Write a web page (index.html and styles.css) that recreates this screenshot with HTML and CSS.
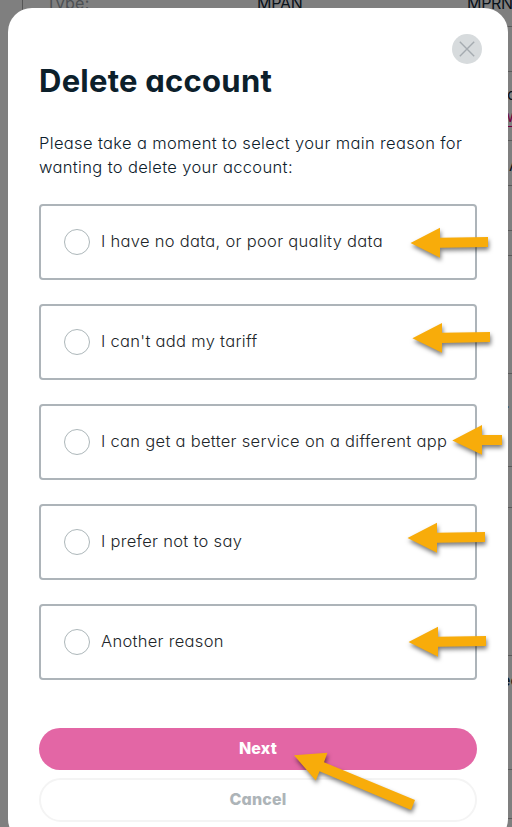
FILE: index.html
```html
<!DOCTYPE html>
<html lang="en">
<head>
    <meta charset="UTF-8">
    <meta name="viewport" content="width=device-width, initial-scale=1.0">
    <title>Delete account</title>
    <link rel="stylesheet" href="styles.css">
</head>
<body>
    <div class="page">
        <div class="row row-head"><span class="label">Type:</span><span>MPAN</span><span>MPRN</span></div>
        <div class="row row-sm"></div>
        <div class="row row-md edge"><span>o</span><a class="link">w</a></div>
        <div class="row row-sm edge"><span class="initial">A</span></div>
        <div class="row row-sm"></div>
        <div class="row row-xs"></div>
        <div class="row row-lg"></div>
        <div class="row row-tall edge"><span class="stop">.</span></div>
        <div class="row row-short"></div>
        <div class="row row-xl"></div>
        <div class="row row-plan edge"><span class="plan">ec</span></div>
        <div class="row row-last"></div>
    </div>

    <div class="overlay">
        <div class="modal">
            <button class="close" aria-label="Close">
                <svg width="30" height="30" viewBox="0 0 30 30"><path d="M7.8 7.8 22.2 22.2M22.2 7.8 7.8 22.2"/></svg>
            </button>
            <h1>Delete account</h1>
            <p>Please take a moment to select your main reason for<br>wanting to delete your account:</p>

            <div class="options">
                <label class="option"><input type="radio" name="reason"><span>I have no data, or poor quality data</span></label>
                <label class="option"><input type="radio" name="reason"><span>I can't add my tariff</span></label>
                <label class="option"><input type="radio" name="reason"><span>I can get a better service on a different app</span></label>
                <label class="option"><input type="radio" name="reason"><span>I prefer not to say</span></label>
                <label class="option"><input type="radio" name="reason"><span>Another reason</span></label>
            </div>

            <div class="actions">
                <button class="btn btn-next">Next</button>
                <button class="btn btn-cancel">Cancel</button>
            </div>
        </div>
    </div>

    <svg class="arrows" width="512" height="827" viewBox="0 0 512 827">
        <path d="M410.5 243 440 227.8V237.7L488 237V247L440 247.8V257.7Z"/>
        <path d="M412.4 338.2 442 323V332.8L490 332V342L442 343V352.7Z"/>
        <path d="M452.3 440.4 482 425V435H502V445H482V454.8Z"/>
        <path d="M407.5 538 437 522.8V532.7L485 532V542L437 542.8V552.7Z"/>
        <path d="M408.5 642 438 626.8V636.7L486 636V646L438 646.8V656.7Z"/>
        <path d="M294 755.2 327.4 752.8 324 762.2 415 800 411 810 319.5 771.3 315.8 780.5Z"/>
    </svg>
</body>
</html>
```

FILE: styles.css
```css
* { box-sizing: border-box; }
body { margin: 0; height: 827px; overflow: hidden; background: #fff; font-family: Inter, sans-serif; font-feature-settings: "cv11"; font-size: 16px; }

/* account page behind the dialog */
.page { width: 490px; height: 827px; margin-left: 22px; border-left: 1px solid #aaa; overflow: hidden; color: #102535; }
.row { border-bottom: 1px solid #b4b4b4; overflow: hidden; }
.row-head { display: grid; grid-template-columns: 209px 210px 45px; height: 27px; padding-left: 25px; line-height: 7px; letter-spacing: -0.3px; }
.label { color: #98a0a6; margin-left: -2px; letter-spacing: 0.3px; }
.row-sm { height: 45px; }
.row-md { height: 69px; }
.row-xs { height: 25px; }
.row-lg { height: 118px; }
.row-tall { height: 93px; }
.row-short { height: 41px; }
.row-xl { height: 148px; }
.row-plan { height: 114px; }
.row-last { height: 49px; }
.edge { display: flex; flex-direction: column; align-items: flex-start; padding-left: 484px; line-height: 24px; }
.row-md.edge { padding-top: 10px; }
.link { height: 21px; margin-left: -6px; border-bottom: 1px solid #e5007d; color: #e5007d; line-height: 20px; }
.initial { padding: 12px 0 0 2px; }
.stop { padding-top: 16px; margin-left: -2px; }
.plan { padding-top: 12px; margin-left: -6px; font-weight: 500; }

.overlay { position: absolute; inset: 0; padding: 8px 4px 0 8px; background: rgba(0, 0, 0, 0.5); overflow: hidden; }
.modal { position: relative; height: 835px; padding: 54px 31px 0; background: #fff; border-radius: 24px; }
.close { position: absolute; top: 26px; right: 26px; width: 30px; height: 30px; padding: 0; border: 0; border-radius: 50%; background: #d7dbdd; }
.close svg { display: block; fill: none; stroke: #a5abb0; stroke-width: 1.4; }
h1 { margin: 0; font-size: 31px; line-height: 38px; font-weight: 700; letter-spacing: 0.25px; color: #0c202b; white-space: nowrap; }
p { margin: 31px 0 25px; font-size: 16.5px; line-height: 24px; font-weight: 300; letter-spacing: 0.35px; color: #0c202b; white-space: nowrap; }

.options { display: flex; flex-direction: column; gap: 24px; }
.option { display: flex; align-items: center; gap: 11px; height: 76px; padding-left: 23px; border: 2px solid #adb4b9; border-radius: 4px; font-size: 16.5px; font-weight: 300; letter-spacing: 0.3px; color: #212529; white-space: nowrap; }
.option input { appearance: none; flex: none; width: 26px; height: 26px; margin: 0; border: 1px solid #adb7ba; border-radius: 50%; }
.option span { padding-bottom: 2px; }

.actions { display: flex; flex-direction: column; gap: 8px; margin-top: 48px; }
.btn { height: 42px; padding: 0 0 2px; border: 0; border-radius: 22px; font-family: inherit; font-feature-settings: inherit; font-size: 16px; font-weight: 800; letter-spacing: 0.2px; }
.btn-next { background: #e366a5; color: #fff; }
.btn-cancel { height: 44px; background: #fff; border: 2px solid #f4f4f4; color: #adb4b8; }

.arrows { position: absolute; top: 0; left: 0; fill: #f8ac0a; filter: drop-shadow(1px 3px 2px rgba(0, 0, 0, 0.5)); }
```
